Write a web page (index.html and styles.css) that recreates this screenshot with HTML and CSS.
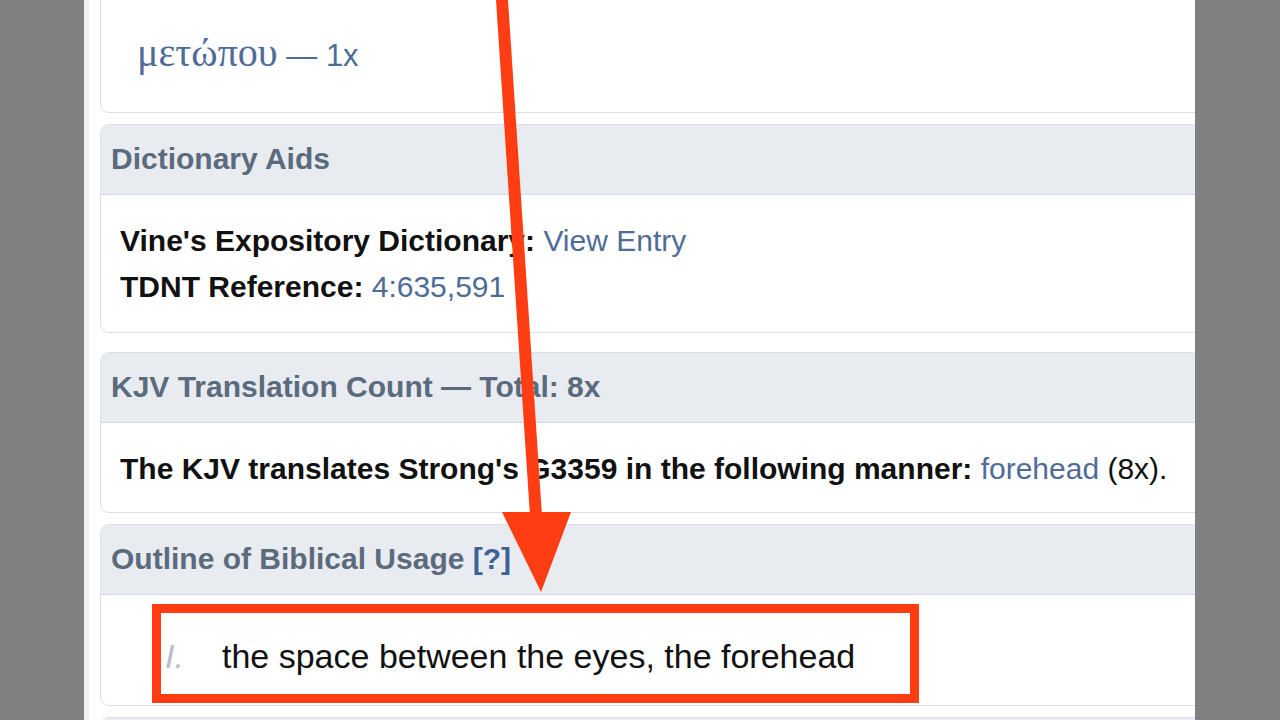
FILE: index.html
```html
<!DOCTYPE html>
<html lang="en">
<head>
<meta charset="utf-8">
<title>Strong's G3359 – Lexicon</title>
<link rel="stylesheet" href="styles.css">
</head>
<body>
<div class="page">
  <div class="column">
    <section class="panel panel-top">
      <div class="panel-body inflections">
        <div class="infl"><a class="link"><span class="greek">μετώπου</span> — 1x</a></div>
      </div>
    </section>

    <section class="panel panel-dict">
      <div class="panel-head">Dictionary Aids</div>
      <div class="panel-body">
        <div class="row"><b>Vine's Expository Dictionary:</b> <a class="link">View Entry</a></div>
        <div class="row"><b>TDNT Reference:</b> <a class="link">4:635,591</a></div>
      </div>
    </section>

    <section class="panel">
      <div class="panel-head">KJV Translation Count — Total: 8x</div>
      <div class="panel-body kjv">
        <div class="row"><b>The KJV translates Strong's G3359 in the following manner:</b> <a class="link">forehead</a> (8x).</div>
      </div>
    </section>

    <section class="panel">
      <div class="panel-head">Outline of Biblical Usage <a class="help">[?]</a></div>
      <div class="panel-body outline">
        <div class="outline-item"><span class="num">I.</span><span class="def">the space between the eyes, the forehead</span></div>
      </div>
    </section>

    <section class="panel panel-next">
      <div class="panel-head">&nbsp;</div>
    </section>
  </div>

  <svg class="overlay" width="1280" height="720" viewBox="0 0 1280 720" aria-hidden="true">
    <polygon points="496,0 508,0 542,516 530,516" fill="#ff3d12"/>
    <polygon points="502,512 571,512 541,592" fill="#ff3d12"/>
    <rect x="156.5" y="608.5" width="758" height="90" fill="none" stroke="#ff3d12" stroke-width="9"/>
  </svg>
</div>
</body>
</html>
```

FILE: styles.css
```css
* { box-sizing: border-box; }

html, body {
  margin: 0;
  padding: 0;
  height: 100%;
}

body {
  background: #808080;
  font-family: "Liberation Sans", Arial, sans-serif;
  color: #111;
  overflow: hidden;
}

.page {
  position: relative;
  width: 1280px;
  height: 720px;
}

.column {
  margin-left: 84px;
  width: 1111px;
  height: 720px;
  background: #ffffff;
  border-left: 5px solid #eef2f7;
  padding-left: 11px;
  overflow: hidden;
}

.panel {
  width: 1130px;
  border: 1px solid #d9e0e8;
  border-radius: 9px;
  background: #fff;
  margin-bottom: 11px;
  overflow: hidden;
}

.panel-top {
  margin-top: -60px;
  height: 173px;
}

.panel-dict {
  margin-bottom: 19px;
}

.panel-head {
  background: #e8ecf1;
  height: 70px;
  border-bottom: 1px solid #d3dbe4;
  padding-left: 10px;
  font-size: 30px;
  font-weight: bold;
  line-height: 68px;
  color: #5b6b7d;
  white-space: nowrap;
}

.help {
  color: #3e6198;
}

.panel-body {
  padding: 23px 19px 22px;
  font-size: 30px;
  line-height: 46px;
  white-space: nowrap;
}

.panel-body b {
  color: #111;
}

.link {
  color: #4f6c98;
  text-decoration: none;
}

.kjv {
  padding-bottom: 20px;
}

.inflections {
  padding: 84px 0 0 36px;
  line-height: 56px;
  font-size: 31px;
}

.infl {
  color: #4f6c98;
  height: 56px;
}

.greek {
  font-family: "Liberation Serif", "DejaVu Serif", serif;
  font-size: 40px;
}

.outline {
  padding: 36px 19px 24px 64px;
  line-height: 50px;
  height: 110px;
}

.outline-item {
  display: flex;
  align-items: baseline;
  font-size: 34px;
}

.num {
  width: 57px;
  color: #b6c0ca;
  font-style: italic;
}

.def {
  color: #111;
}

.panel-next {
  height: 80px;
}

.overlay {
  position: absolute;
  left: 0;
  top: 0;
  pointer-events: none;
}
```
